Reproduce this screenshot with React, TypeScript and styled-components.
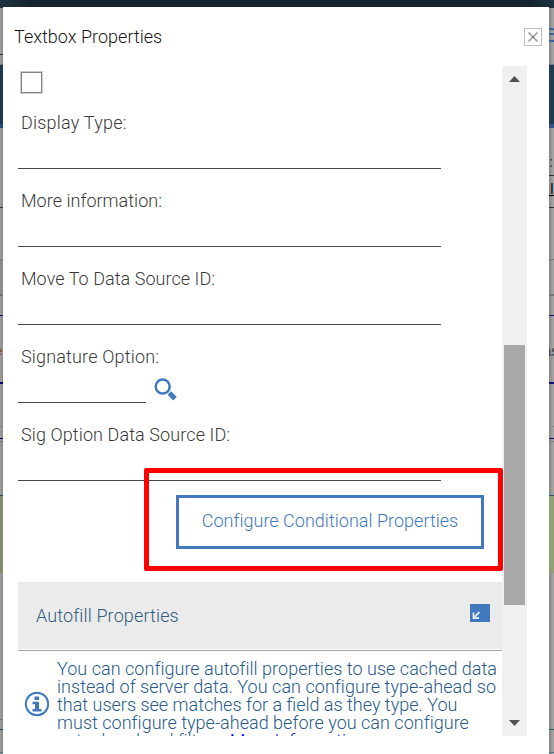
import React from "react";
import styled, { createGlobalStyle } from "styled-components";

const blue = "#4178be";

const GlobalStyle = createGlobalStyle`
  * { box-sizing: border-box; }
  body { margin: 0; overflow: hidden; font-family: Roboto, "Open Sans", sans-serif; font-weight: 300; }
`;

const Page = styled.div`
  width: 554px;
  height: 754px;
  display: grid;
  grid-template: 7px 747px / 3px 546px 5px;
  overflow: hidden;
  background: #999;
`;

const TopBar = styled.div`
  grid-column: 1 / -1;
  background: linear-gradient(90deg, #1d3340, #14242f 30px, #14242f 530px, #1d3340);
`;

const Strip = styled.div<{ $side: "left" | "right" }>`
  display: flex;
  flex-direction: column;
  overflow: hidden;
  background: ${(p) =>
    p.$side === "left"
      ? "linear-gradient(90deg, #9c9c9c, #8c8c8c)"
      : "linear-gradient(90deg, #858585, #a8a8a7)"};
`;

const Band = styled.div<{ $h: number; $c?: string }>`
  flex: none;
  height: ${(p) => p.$h}px;
  background: ${(p) => p.$c ?? "transparent"};
`;

const Fragment = styled.div<{ $h: number; $c: string; $size: number; $shift?: number }>`
  flex: none;
  height: ${(p) => p.$h}px;
  text-indent: ${(p) => p.$shift ?? 0}px;
  overflow: hidden;
  white-space: nowrap;
  color: ${(p) => p.$c};
  font: 400 ${(p) => p.$size}px/${(p) => p.$h}px "Liberation Sans", sans-serif;
`;

const Dialog = styled.section`
  background: #fff;
  display: flex;
  flex-direction: column;
`;

const Header = styled.header`
  height: 59px;
  flex: none;
  display: flex;
  justify-content: space-between;
  align-items: center;
  padding: 0 7px 0 11px;
`;

const Text = styled.span<{ $track: number }>`
  letter-spacing: ${(p) => p.$track}px;
  white-space: nowrap;
`;

const Title = styled.h1`
  margin: 0;
  font-size: 18px;
  font-weight: 300;
  line-height: 24px;
  color: #161616;
`;

const CloseButton = styled.button`
  width: 18px;
  height: 18px;
  padding: 0;
  border: 1px solid #c0c0c0;
  background: #fff;
  display: grid;
  place-items: center;
`;

const Body = styled.div`
  position: relative;
  height: 670px;
  display: flex;
  padding-left: 15px;
`;

const Content = styled.div`
  width: 484px;
  height: 670px;
  overflow: hidden;
`;

const CheckRow = styled.div`
  height: 43px;
  padding: 5px 0 0 2px;
`;

const Checkbox = styled.div`
  width: 23px;
  height: 23px;
  border: 1px solid #ccc;
  box-shadow: inset 0 0 0 1px #858585;
`;

const Fields = styled.div`
  display: flex;
  flex-direction: column;
  gap: 18px;
`;

const Field = styled.div`
  height: 60px;
  display: flex;
  flex-direction: column;
  justify-content: space-between;
`;

const Label = styled.label`
  padding-left: 3px;
  font-size: 18px;
  line-height: 28px;
  color: #3a3a3a;
`;

const InputRow = styled.div`
  height: 32px;
  display: flex;
  align-items: flex-end;
  gap: 7px;
`;

const Line = styled.div<{ $w: number }>`
  width: ${(p) => p.$w}px;
  height: 100%;
  border-bottom: 1px solid #464646;
`;

const ButtonRow = styled.div`
  height: 101px;
  padding: 14px 18px 0 0;
  display: flex;
  justify-content: flex-end;
  align-items: flex-start;
`;

const ConfigureButton = styled.button`
  width: 308px;
  height: 54px;
  padding: 0 0 3px;
  border: 3px solid ${blue};
  background: #fff;
  color: ${blue};
  font: 300 18px Roboto, sans-serif;
`;

const Highlight = styled.div`
  position: absolute;
  left: 141px;
  top: 402px;
  width: 359px;
  height: 103px;
  border: 5px solid #f00;
  border-radius: 2px;
  pointer-events: none;
`;

const SectionHeader = styled.div`
  height: 67px;
  padding: 0 12px 0 18px;
  display: flex;
  align-items: center;
  justify-content: space-between;
  background: #ebebeb;
  color: #325c80;
  font-size: 18px;
`;

const SectionRule = styled.div`
  height: 2px;
  border-bottom: 1px solid #a6a6a6;
`;

const Collapse = styled.svg`
  display: block;
  margin-bottom: 5px;
`;

const Info = styled.div`
  display: flex;
  padding: 9px 0 0 6px;
`;

const InfoIcon = styled.svg`
  flex: none;
  margin: 31px 7px 0 0;
`;

const Message = styled.div`
  display: flex;
  flex-direction: column;
  color: #285a8c;
  font-size: 18px;
  line-height: 18px;
`;

const MoreLink = styled.a`
  color: #00f;
`;

const ScrollBar = styled.div`
  width: 25px;
  height: 670px;
  background: #f0f0f0;
  display: flex;
  flex-direction: column;
  align-items: center;
`;

const Arrow = styled.svg`
  flex: none;
  display: block;
`;

const Track = styled.div`
  flex: 1;
  width: 21px;
  padding-top: 253px;
`;

const Thumb = styled.div`
  height: 260px;
  background: #a8a8a8;
`;

const fields = [
  { label: "Display Type:", track: 0.22 },
  { label: "More information:", track: 0.03 },
  { label: "Move To Data Source ID:", track: 0.05 },
  { label: "Signature Option:", track: 0.17, search: true },
  { label: "Sig Option Data Source ID:", track: 0.1 },
];

const lines = [
  { text: "You can configure autofill properties to use cached data", track: 0.03 },
  { text: "instead of server data. You can configure type-ahead so", track: 0.04 },
  { text: "that users see matches for a field as they type. You", track: 0 },
  { text: "must configure type-ahead before you can configure", track: 0.02 },
];

const SearchIcon = () => (
  <svg width="25" height="25" viewBox="0 0 25 25">
    <circle cx="9.7" cy="8.6" r="7" fill="none" stroke={blue} strokeWidth="2.5" />
    <path d="M16.4 15.1 L22 20.7" stroke={blue} strokeWidth="5" />
  </svg>
);

export default function App() {
  return (
    <>
      <GlobalStyle />
      <Page>
        <TopBar />
        <Strip $side="left">
          <Band $h={1} $c="#1c323f" />
          <Band $h={46} />
          <Band $h={1} $c="#333" />
          <Band $h={9} />
          <Band $h={1} $c="#777" />
          <Band $h={59} $c="#1d3a50" />
          <Band $h={4} $c="#274a7c" />
          <Band $h={79} />
          <Band $h={1} $c="#333" />
          <Band $h={51} />
          <Band $h={1} $c="#777" />
          <Band $h={34} $c="#8c8c8c" />
          <Band $h={2} $c="#707070" />
          <Band $h={19} />
          <Band $h={1} $c="#0c0c6d" />
          <Band $h={30} />
          <Fragment $h={9} $c="#8c4b20" $size={13} $shift={-5}>e</Fragment>
          <Band $h={27} />
          <Band $h={2} $c="#000080" />
          <Band $h={42} />
          <Band $h={1} $c="#808080" />
          <Band $h={11} />
          <Band $h={1} $c="#000080" />
          <Band $h={2} />
          <Band $h={1} $c="#777" />
          <Band $h={53} />
          <Band $h={1} $c="#284457" />
          <Band $h={77} $c="#808c66" />
          <Band $h={146} />
          <Band $h={1} $c="#777" />
          <Band $h={9} />
          <Band $h={1} $c="#284457" />
          <Band $h={22} />
          <Band $h={1} $c="#53708c" />
        </Strip>
        <Dialog>
          <Header>
            <Title><Text $track={0.02}>Textbox Properties</Text></Title>
            <CloseButton aria-label="Close">
              <svg width="12" height="12" viewBox="0 0 12 12">
                <path d="M1.5 1.5 L10.5 10.5 M10.5 1.5 L1.5 10.5" stroke="#999" strokeWidth="1.5" />
                <rect x="5" y="5" width="2" height="2" fill="#777" />
              </svg>
            </CloseButton>
          </Header>
          <Body>
            <Content>
              <CheckRow><Checkbox role="checkbox" aria-checked="false" /></CheckRow>
              <Fields>
                {fields.map((f) => (
                  <Field key={f.label}>
                    <Label><Text $track={f.track}>{f.label}</Text></Label>
                    <InputRow>
                      <Line $w={f.search ? 128 : 423} />
                      {f.search && <SearchIcon />}
                    </InputRow>
                  </Field>
                ))}
              </Fields>
              <ButtonRow>
                <ConfigureButton><Text $track={0.02}>Configure Conditional Properties</Text></ConfigureButton>
              </ButtonRow>
              <SectionHeader>
                <Text $track={0.13}>Autofill Properties</Text>
                <Collapse width="20" height="18" viewBox="0 0 20 18">
                  <rect width="20" height="18" fill={blue} />
                  <path d="M3.5 8.5 V14 H9 M4 13.5 L9.5 8" fill="none" stroke="#dce8f5" strokeWidth="1.8" />
                </Collapse>
              </SectionHeader>
              <SectionRule />
              <Info>
                <InfoIcon width="26" height="26" viewBox="0 0 26 26">
                  <circle cx="13" cy="13" r="11.2" fill="none" stroke={blue} strokeWidth="2" />
                  <path d="M10.5 5.5 h4.5 v3.5 h-4.5 z M8.5 10.8 h6.5 v7.2 h2.5 v2.4 h-9 V18 h2.5 v-4.8 h-2.5 z" fill={blue} />
                </InfoIcon>
                <Message>
                  {lines.map((l) => (
                    <Text key={l.text} $track={l.track}>{l.text}</Text>
                  ))}
                  <Text $track={-0.1}>
                    autoahead and filters. <MoreLink>More Information</MoreLink>
                  </Text>
                </Message>
              </Info>
            </Content>
            <ScrollBar>
              <Arrow width="25" height="26" viewBox="0 0 25 26">
                <path d="M12.5 10 L18 16 H7 Z" fill="#505050" />
              </Arrow>
              <Track><Thumb /></Track>
              <Arrow width="25" height="26" viewBox="0 0 25 26">
                <path d="M7 10 H18 L12.5 16 Z" fill="#505050" />
              </Arrow>
            </ScrollBar>
            <Highlight />
          </Body>
        </Dialog>
        <Strip $side="right">
          <Band $h={1} $c="#1c323f" />
          <Band $h={12} />
          <Fragment $h={26} $c="#315f99" $size={26} $shift={-5}>e</Fragment>
          <Band $h={18} />
          <Band $h={1} $c="#777" />
          <Band $h={59} $c="#203c50" />
          <Band $h={4} $c="#315386" />
          <Band $h={26} />
          <Fragment $h={16} $c="#333" $size={15}>:</Fragment>
          <Band $h={5} />
          <Band $h={1} $c="#333" />
          <Band $h={7} />
          <Fragment $h={12} $c="#222" $size={17} $shift={1}>l</Fragment>
          <Band $h={1} $c="#000" />
          <Band $h={11} />
          <Band $h={1} $c="#333" />
          <Band $h={51} />
          <Band $h={1} $c="#777" />
          <Band $h={34} />
          <Band $h={2} $c="#777" />
          <Band $h={19} />
          <Band $h={1} $c="#101080" />
          <Band $h={28} />
          <Fragment $h={13} $c="#3a4050" $size={15} $shift={-6}>as</Fragment>
          <Band $h={25} />
          <Band $h={2} $c="#101080" />
          <Band $h={42} />
          <Band $h={1} $c="#888" />
          <Band $h={11} />
          <Band $h={1} $c="#101080" />
          <Band $h={2} />
          <Band $h={1} $c="#808080" />
          <Band $h={53} />
          <Band $h={1} $c="#31566b" />
          <Band $h={77} $c="#929e76" />
          <Band $h={156} />
          <Band $h={1} $c="#31566b" />
          <Band $h={22} />
          <Band $h={1} $c="#53708c" />
        </Strip>
      </Page>
    </>
  );
}
